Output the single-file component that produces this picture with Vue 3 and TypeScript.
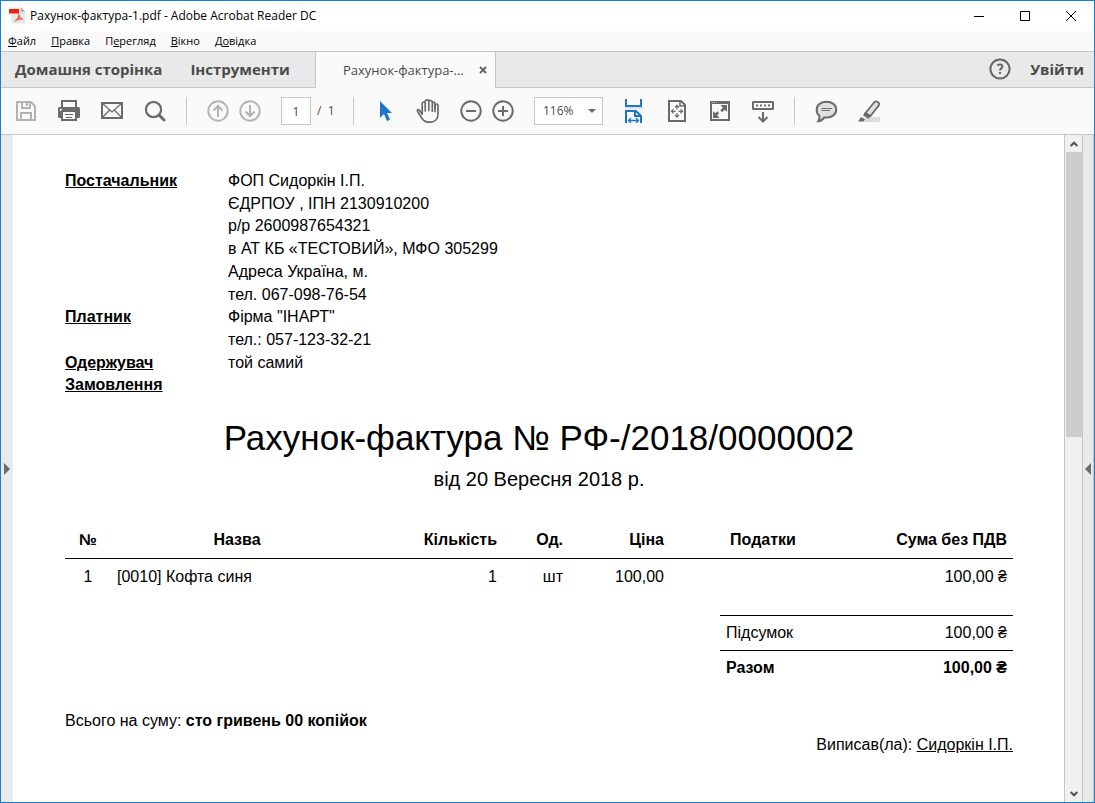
<script setup lang="ts">
import { ref } from 'vue'

interface MenuItem { before: string; key: string; after: string }
interface Party { label: string; lines: string[] }
interface Item { no: number; name: string; qty: number; unit: string; price: string; tax: string; sum: string }

const menu: MenuItem[] = [
  { before: '', key: 'Ф', after: 'айл' },
  { before: '', key: 'П', after: 'равка' },
  { before: 'П', key: 'е', after: 'регляд' },
  { before: '', key: 'В', after: 'ікно' },
  { before: 'Д', key: 'о', after: 'відка' },
]

const parties: Party[] = [
  {
    label: 'Постачальник',
    lines: [
      'ФОП Сидоркін І.П.',
      'ЄДРПОУ , ІПН 2130910200',
      'р/р 2600987654321',
      'в АТ КБ «ТЕСТОВИЙ», МФО 305299',
      'Адреса Україна, м.',
      'тел. 067-098-76-54',
    ],
  },
  { label: 'Платник', lines: ['Фірма "ІНАРТ"', 'тел.: 057-123-32-21'] },
  { label: 'Одержувач', lines: ['той самий'] },
  { label: 'Замовлення', lines: [''] },
]

const items: Item[] = [
  { no: 1, name: '[0010] Кофта синя', qty: 1, unit: 'шт', price: '100,00', tax: '', sum: '100,00 ₴' },
]

const page = ref('1')
const zoom = ref('116%')
</script>

<template>
  <div class="window">
    <header class="titlebar">
      <svg class="app-icon" width="18" height="18" viewBox="0 0 18 18">
        <path d="M2.500 0.500h10l3.500 3.500v12.500H2.500z" fill="#e6e6e6" />
        <path d="M12 0.500v4h4z" fill="#a8a8a8" />
        <path d="M0 2h10v4.500H0z" fill="#ee2312" />
        <path d="M6 14c2.500-1 4-4 3.800-7 .3 3.500 1.800 5 4 5.200-2.300-.6-5.300 0-7.800 1.800z" fill="none" stroke="#ec5a48" stroke-width="1.200" />
      </svg>
      <span class="title">Рахунок-фактура-1.pdf - Adobe Acrobat Reader DC</span>
      <div class="controls">
        <button type="button" aria-label="Згорнути">
          <svg width="12" height="12" viewBox="0 0 12 12"><path d="M1 6.5h10" /></svg>
        </button>
        <button type="button" aria-label="Розгорнути">
          <svg width="12" height="12" viewBox="0 0 12 12"><path d="M1.5 1.5h9v9h-9z" /></svg>
        </button>
        <button type="button" aria-label="Закрити">
          <svg width="12" height="12" viewBox="0 0 12 12"><path d="M1 1l10 10M11 1L1 11" /></svg>
        </button>
      </div>
    </header>

    <nav class="menu">
      <button v-for="m in menu" :key="m.key + m.after" type="button">{{ m.before }}<u>{{ m.key }}</u>{{ m.after }}</button>
    </nav>

    <nav class="tabs">
      <div class="home-tabs">
        <button type="button">Домашня сторінка</button>
        <button type="button">Інструменти</button>
      </div>
      <div class="doc-tab">
        <span>Рахунок-фактура-...</span>
        <button type="button" aria-label="Закрити вкладку">
          <svg width="8" height="8" viewBox="0 0 8 8"><path d="M1 1l6 6M7 1L1 7" stroke="#666" stroke-width="2" /></svg>
        </button>
      </div>
      <div class="account">
        <button type="button" aria-label="Довідка">
          <svg width="24" height="24" viewBox="0 0 24 24" fill="none" stroke="#666" stroke-width="2">
            <circle cx="12" cy="12" r="9.6" />
            <path d="M9.4 8.6c1-1.6 5-1.5 5 .9 0 1.9-2.4 1.9-2.4 4" />
            <path d="M12 15v2" />
          </svg>
        </button>
        <button type="button">Увійти</button>
      </div>
    </nav>

    <div class="toolbar">
      <button type="button" aria-label="Зберегти">
        <svg viewBox="0 0 24 24" fill="none" stroke="#b3b3b3" stroke-width="2">
          <path d="M3 3h14l4 4v14H3z" />
          <path d="M8 3v6h8V3M13 4v3" />
          <path d="M7 21v-7h10v7" />
        </svg>
      </button>
      <button type="button" aria-label="Друк">
        <svg viewBox="0 0 24 24">
          <path d="M5 8V2h14v6" fill="none" stroke="#6b6b6b" stroke-width="2" />
          <rect x="1" y="8" width="22" height="11" rx="1.5" fill="#6b6b6b" />
          <rect x="3" y="10" width="2" height="2" fill="#fafafa" />
          <path d="M5 12h14v9H5z" fill="#fafafa" stroke="#6b6b6b" stroke-width="2" />
          <path d="M8 15.5h8M9 18.5h6" stroke="#6b6b6b" />
        </svg>
      </button>
      <button type="button" aria-label="Надіслати">
        <svg viewBox="0 0 24 24" fill="none" stroke="#6b6b6b">
          <path d="M2 4h20v15H2z" stroke-width="2" />
          <path d="M2 4l10 9 10-9M2 19l7.500-8M22 19l-7.500-8" stroke-width="1.2" />
        </svg>
      </button>
      <button type="button" aria-label="Пошук">
        <svg viewBox="0 0 24 24" fill="none" stroke="#6b6b6b">
          <circle cx="10.500" cy="10.500" r="7.600" stroke-width="2.200" />
          <path d="M16 16l5 5" stroke-width="3" stroke-linecap="round" />
        </svg>
      </button>
      <i class="sep"></i>
      <div class="pair">
        <button type="button" aria-label="Попередня сторінка">
          <svg viewBox="0 0 24 24" fill="none" stroke="#b3b3b3" stroke-width="2">
            <circle cx="12" cy="12" r="9.7" /><path d="M12 18V7M7.500 11.500L12 7l4.500 4.500" />
          </svg>
        </button>
        <button type="button" aria-label="Наступна сторінка">
          <svg viewBox="0 0 24 24" fill="none" stroke="#b3b3b3" stroke-width="2">
            <circle cx="12" cy="12" r="9.7" /><path d="M12 6v11M7.500 12.500L12 17l4.500-4.500" />
          </svg>
        </button>
      </div>
      <div class="pager">
        <input v-model="page" type="text" aria-label="Номер сторінки" />
        <span>/&nbsp; 1</span>
      </div>
      <i class="sep"></i>
      <button type="button" aria-label="Вибір">
        <svg viewBox="0 0 24 24"><path d="M7 2v17l4-4 3 7 3-1.300-3-6.700h5z" fill="#1d74cc" /></svg>
      </button>
      <button type="button" aria-label="Рука">
        <svg viewBox="0 0 24 24" fill="none" stroke="#6b6b6b" stroke-width="1.700" stroke-linecap="round" stroke-linejoin="round">
          <path d="M6.200 15L3.600 11.400C2 9.500 0.800 11 1.800 12.700L6 19.500C8 22.500 10 23.200 13.500 23.200c5.500 0 8.500-3.500 8.500-8V6.500c0-2-3-2-3 0v6" />
          <path d="M6.200 15V4.500c0-2 3-2 3 0v7.500M9.200 11V2.600c0-2.200 3.600-2.200 3.600 0V11.500M12.800 10V2.800c.3-2 3.500-1.600 3.500.4v9M16.300 6V4.300c.4-1.700 2.700-1.400 2.700.5V9" />
        </svg>
      </button>
      <div class="pair">
        <button type="button" aria-label="Зменшити">
          <svg viewBox="0 0 24 24" fill="none" stroke="#6b6b6b" stroke-width="2">
            <circle cx="12" cy="12" r="9.700" /><path d="M7 12h10" />
          </svg>
        </button>
        <button type="button" aria-label="Збільшити">
          <svg viewBox="0 0 24 24" fill="none" stroke="#6b6b6b" stroke-width="2">
            <circle cx="12" cy="12" r="9.700" /><path d="M7 12h10M12 7v10" />
          </svg>
        </button>
      </div>
      <div class="zoom">
        <select v-model="zoom" aria-label="Масштаб">
          <option>100%</option>
          <option>116%</option>
          <option>150%</option>
        </select>
        <svg class="caret" width="8" height="4" viewBox="0 0 8 4"><path d="M0 0h8L4 4z" fill="#6b6b6b" /></svg>
      </div>
      <button type="button" aria-label="За шириною">
        <svg viewBox="0 0 24 24" fill="none" stroke="#1d74cc" stroke-width="2">
          <path d="M3 9h18" stroke="#dde3ea" />
          <path d="M4 0v7h15V0" />
          <path d="M4 24V12h10l5 5v7M13 12v5h6" />
          <path d="M6.500 21.500h10M9 19L6.500 21.500 9 24M14 19l2.500 2.500L14 24" stroke-width="1.300" />
        </svg>
      </button>
      <button type="button" aria-label="Уся сторінка">
        <svg viewBox="0 0 24 24" fill="none" stroke="#6b6b6b" stroke-width="2">
          <path d="M4 2h12l4 4v16H4z" /><path d="M15 2v5h5" stroke-width="1.500" />
          <path d="M12 6.500v4M12 14v4M6.500 12.300h4M13.500 12.300h4" stroke-width="1.200" />
          <path d="M10 8.500l2-2 2 2M10 16l2 2 2-2M8.500 10.300l-2 2 2 2M15.500 10.300l2 2-2 2" stroke-width="1.300" />
        </svg>
      </button>
      <button type="button" aria-label="На весь екран">
        <svg viewBox="0 0 24 24">
          <path d="M3 3h18v18H3z" fill="none" stroke="#6b6b6b" stroke-width="2" />
          <path d="M2 2h20v3H2z" fill="#6b6b6b" />
          <path d="M4 3.500h5" stroke="#bbb" stroke-dasharray="1 1" />
          <path d="M19 6v7l-2.300-2.300-2.500 2.500-1.900-1.900 2.500-2.500L12.500 6zM5 19v-7l2.300 2.300 2-2 1.900 1.900-2 2L11.500 19z" fill="#6b6b6b" />
        </svg>
      </button>
      <button type="button" aria-label="Прокручування">
        <svg viewBox="0 0 24 24" fill="none" stroke="#6b6b6b" stroke-width="2">
          <rect x="2" y="3" width="20" height="7" rx=".5" />
          <path d="M5 6.500h14" stroke-dasharray="2 2" />
          <path d="M12 13v9M7.500 18l4.500 4.500 4.500-4.500" />
        </svg>
      </button>
      <i class="sep"></i>
      <button type="button" aria-label="Коментар">
        <svg viewBox="0 0 24 24" stroke="#6b6b6b">
          <path d="M12.500 2.800c5.800 0 9.700 3.300 9.700 7.900s-3.900 7.900-9.700 7.900c-.8 0-1.500 0-2.200-.2-1.500 2.400-3.600 3.600-6.100 3.900 1-1.500 1.500-3.400 1.300-5.300-1.800-1.400-2.800-3.700-2.800-6.300 0-4.600 4-7.900 9.800-7.900z" fill="#e0e0e0" stroke-width="2" />
          <path d="M7.500 9.500h10.500M7.500 11.500H16" stroke-width="1.200" />
        </svg>
      </button>
      <button type="button" aria-label="Виділення">
        <svg viewBox="0 0 24 24">
          <path d="M9 18h14v5H5z" fill="#dcdcdc" />
          <path d="M17.500 3c1.500-1.500 5.500.3 4.500 3L13.500 17l-5-3z" fill="#e0e0e0" stroke="#6b6b6b" stroke-width="1.800" />
          <path d="M8 13l6 3.700-2.500 3L6 16.500z" fill="#6b6b6b" />
          <path d="M4 18l4 2-1.500 2.500H1z" fill="#6b6b6b" />
        </svg>
      </button>
    </div>

    <div class="workspace">
      <button type="button" class="side left" aria-label="Показати панель навігації">
        <svg width="6" height="12" viewBox="0 0 6 12"><path d="M0 0l6 6-6 6z" fill="#6b6b6b" /></svg>
      </button>
      <main class="sheet">
        <dl class="parties">
          <template v-for="p in parties" :key="p.label">
            <template v-for="(line, i) in p.lines" :key="p.label + i">
              <dt v-if="i === 0">{{ p.label }}</dt>
              <dd>{{ line }}</dd>
            </template>
          </template>
        </dl>

        <h1>Рахунок-фактура № РФ-/2018/0000002</h1>
        <p class="date">від 20 Вересня 2018 р.</p>

        <table class="items">
          <colgroup>
            <col class="c-no" /><col class="c-name" /><col class="c-qty" /><col class="c-unit" />
            <col class="c-price" /><col class="c-tax" /><col class="c-sum" />
          </colgroup>
          <thead>
            <tr>
              <th class="mid">№</th>
              <th class="mid">Назва</th>
              <th>Кількість</th>
              <th>Од.</th>
              <th>Ціна</th>
              <th class="mid">Податки</th>
              <th>Сума без ПДВ</th>
            </tr>
          </thead>
          <tbody>
            <tr v-for="it in items" :key="it.no">
              <td class="mid">{{ it.no }}</td>
              <td class="start">{{ it.name }}</td>
              <td>{{ it.qty }}</td>
              <td>{{ it.unit }}</td>
              <td>{{ it.price }}</td>
              <td>{{ it.tax }}</td>
              <td>{{ it.sum }}</td>
            </tr>
          </tbody>
        </table>

        <table class="totals">
          <tbody>
            <tr><th scope="row">Підсумок</th><td>100,00 ₴</td></tr>
            <tr class="grand"><th scope="row">Разом</th><td>100,00 ₴</td></tr>
          </tbody>
        </table>

        <p class="words">Всього на суму: <b>сто гривень 00 копійок</b></p>
        <p class="signed">Виписав(ла): <u>Сидоркін І.П.</u></p>
      </main>
      <div class="scrollbar">
        <button type="button" aria-label="Вгору">
          <svg width="8" height="6" viewBox="0 0 8 6"><path d="M0.700 5L4 1.700 7.300 5" /></svg>
        </button>
        <div class="track"><div class="thumb"></div></div>
        <button type="button" aria-label="Вниз">
          <svg width="8" height="6" viewBox="0 0 8 6"><path d="M0.700 1L4 4.300 7.300 1" /></svg>
        </button>
      </div>
      <button type="button" class="side right" aria-label="Показати панель інструментів">
        <svg width="6" height="12" viewBox="0 0 6 12"><path d="M6 0L0 6l6 6z" fill="#6b6b6b" /></svg>
      </button>
    </div>
  </div>
</template>

<style>
body {
  margin: 0;
}
</style>

<style scoped>
.window {
  display: flex;
  flex-direction: column;
  box-sizing: border-box;
  height: 100vh;
  border: 1px solid #1a7fd4;
  background: #fafafa;
  color: #000;
  font: 12px/16px "Open Sans", "Noto Sans", sans-serif;
  overflow: hidden;
}
button {
  display: flex;
  align-items: center;
  justify-content: center;
  padding: 0;
  border: 0;
  background: none;
  color: inherit;
  font: inherit;
}
svg {
  display: block;
}
.titlebar {
  display: flex;
  align-items: center;
  flex: none;
  height: 30px;
  padding-left: 8px;
  background: #fff;
}
.title {
  margin-left: 3px;
}
.controls {
  display: flex;
  margin-left: auto;
}
.controls button {
  width: 46px;
  height: 30px;
}
.controls svg {
  fill: none;
  stroke: #000;
}
.menu {
  display: flex;
  flex: none;
  gap: 15px;
  height: 20px;
  padding-left: 7px;
  font-size: 11px;
}
.tabs {
  display: flex;
  flex: none;
  height: 37px;
  box-sizing: border-box;
  border-top: 1px solid #c6c6c6;
  background: #e9e9e9;
  color: #4b4b4b;
}
.home-tabs,
.account {
  display: flex;
  align-items: center;
  border-bottom: 1px solid #c6c6c6;
  font-size: 15px;
  font-weight: 700;
}
.home-tabs {
  box-sizing: border-box;
  width: 314px;
  gap: 28px;
  padding: 0 0 2px 14px;
}
.doc-tab {
  display: flex;
  align-items: center;
  justify-content: space-between;
  box-sizing: border-box;
  width: 181px;
  padding: 0 8px 0 27px;
  border: solid #c6c6c6;
  border-width: 0 1px;
  background: #fafafa;
  font-size: 13px;
}
.account {
  flex: 1;
  justify-content: flex-end;
  gap: 18px;
  padding: 0 10px 2px 0;
}
.toolbar {
  display: flex;
  align-items: center;
  flex: none;
  gap: 19px;
  height: 46px;
  padding-left: 13px;
  border-bottom: 1px solid #c6c6c6;
}
.toolbar button {
  flex: none;
}
.toolbar button svg {
  width: 24px;
  height: 24px;
}
.sep {
  flex: none;
  width: 1px;
  height: 28px;
  background: #c8c8c8;
}
.pair {
  display: flex;
  gap: 8px;
}
.pager {
  display: flex;
  align-items: center;
  gap: 6px;
  width: 53px;
  color: #4b4b4b;
  white-space: nowrap;
}
.pager input,
.zoom select {
  box-sizing: border-box;
  height: 28px;
  border: 1px solid #c6c6c6;
  border-radius: 0;
  background: #fff;
  color: #4b4b4b;
  font: inherit;
}
.pager input {
  width: 30px;
  padding: 0;
  text-align: center;
}
.zoom {
  position: relative;
}
.zoom select {
  display: block;
  width: 69px;
  padding: 0 0 0 8px;
  appearance: none;
}
.caret {
  position: absolute;
  top: 12px;
  right: 7px;
  pointer-events: none;
}
.workspace {
  display: flex;
  flex: 1;
  min-height: 0;
}
.side {
  flex: none;
  box-sizing: border-box;
  background: #e9e9e9;
}
.left {
  width: 12px;
}
.right {
  width: 12px;
  border: solid #c6c6c6;
  border-width: 0 1px;
}
.sheet {
  flex: 1;
  padding: 35px 51px 0 52px;
  background: #fff;
  font: 16px/23px "Liberation Sans", Arial, sans-serif;
  overflow: hidden;
}
.parties {
  display: grid;
  grid-template-columns: 163px 1fr;
  grid-auto-rows: 1fr;
  height: 227px;
  margin: 0;
  line-height: 22px;
}
dt {
  font-weight: 700;
  text-decoration: underline;
}
dd {
  grid-column: 2;
  margin: 0;
}
h1 {
  margin: 18px 0 0;
  font-size: 35px;
  font-weight: 400;
  line-height: 46px;
  text-align: center;
}
p {
  margin: 0;
}
.date {
  margin-top: 4px;
  font-size: 20px;
  line-height: 28px;
  text-align: center;
}
.items {
  width: 100%;
  margin-top: 29px;
  border-collapse: collapse;
  table-layout: fixed;
}
.c-no { width: 46px; }
.c-name { width: 252px; }
.c-qty { width: 140px; }
.c-unit { width: 66px; }
.c-price { width: 101px; }
.c-tax { width: 186px; }
.c-sum { width: 157px; }
th,
td {
  padding: 6px;
  text-align: right;
}
.items thead {
  border-bottom: 1px solid #000;
}
.items thead th {
  padding-bottom: 7px;
}
.items .mid {
  text-align: center;
}
.items .start {
  text-align: left;
}
.totals {
  width: 293px;
  margin: 21px 0 0 auto;
  border-collapse: collapse;
  line-height: 22px;
}
.totals tr {
  border-top: 1px solid #000;
}
.totals th {
  font-weight: 400;
  text-align: left;
}
.totals .grand th,
.totals .grand td {
  font-weight: 700;
}
.words {
  margin-top: 24px;
}
.signed {
  margin-top: 1px;
  text-align: right;
}
.scrollbar {
  display: flex;
  flex-direction: column;
  flex: none;
  width: 16px;
  padding-left: 1px;
  border-left: 1px solid #c6c6c6;
  background: #f0f0f0;
}
.scrollbar button {
  flex: none;
  height: 17px;
}
.scrollbar svg {
  fill: none;
  stroke: #505050;
  stroke-width: 2;
}
.track {
  flex: 1;
}
.thumb {
  height: 45%;
  background: #cdcdcd;
}
</style>
